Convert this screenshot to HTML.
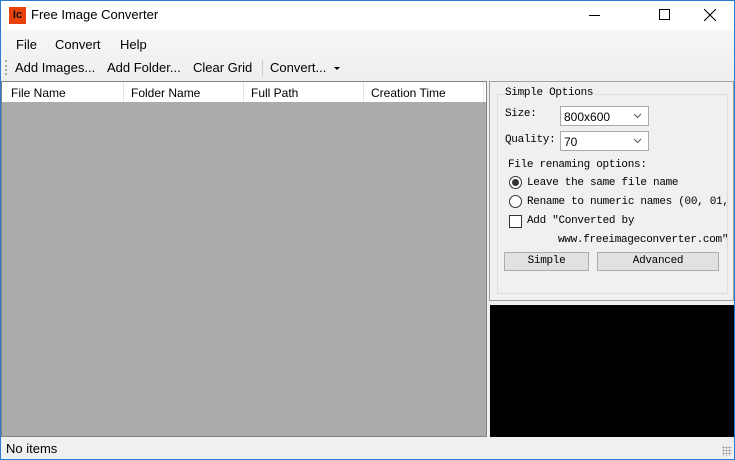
<!DOCTYPE html>
<html><head><style>
*{margin:0;padding:0;box-sizing:border-box}
body{width:735px;height:460px;overflow:hidden;background:#f0f0f0;font-family:"Liberation Sans",sans-serif;font-size:12px;color:#000;position:relative}
.a{position:absolute}
.m{font-family:"Liberation Mono","Noto Sans CJK SC",monospace;font-size:11px;letter-spacing:-0.3px}
.win{border:1px solid #2b7bd0;position:absolute;left:0;top:0;width:735px;height:460px;pointer-events:none}
.hd span{position:absolute;top:4px}
.cb{background:#fff;border:1px solid #a9a9a9;height:20px}
.btn{background:#e1e1e1;border:1px solid #adadad;height:19px;text-align:center;line-height:17px}
</style></head><body>
<div class="a" style="left:0;top:0;width:735px;height:30px;background:#fff"></div>
<div class="a" style="left:9px;top:7px;width:17px;height:17px;background:#e8410c;color:#111;font-weight:bold;font-size:11px;line-height:17px;text-align:center">Ic</div>
<div class="a" style="left:31px;top:7px;font-size:13px">Free Image Converter</div>
<div class="a" style="left:589px;top:15px;width:11px;height:1px;background:#000"></div>
<div class="a" style="left:659px;top:9px;width:11px;height:11px;border:1px solid #000"></div>
<svg class="a" style="left:704px;top:9px" width="12" height="12"><path d="M0 0L12 12M12 0L0 12" stroke="#000" stroke-width="1.1"/></svg>
<div class="a" style="left:0;top:30px;width:735px;height:50px;background:linear-gradient(#f6f7f9,#eeeef0)"></div>
<div class="a" style="left:16px;top:37px;font-size:13px">File</div>
<div class="a" style="left:55px;top:37px;font-size:13px">Convert</div>
<div class="a" style="left:120px;top:37px;font-size:13px">Help</div>
<div class="a" style="left:5px;top:60px;width:2px;height:15px;border-left:2px dotted #aaa"></div>
<div class="a" style="left:15px;top:60px;font-size:13px;word-spacing:0">Add Images...</div>
<div class="a" style="left:107px;top:60px;font-size:13px">Add Folder...</div>
<div class="a" style="left:193px;top:60px;font-size:13px">Clear Grid</div>
<div class="a" style="left:262px;top:60px;width:1px;height:16px;background:#ccc"></div>
<div class="a" style="left:270px;top:60px;font-size:13px">Convert...</div>
<div class="a" style="left:334px;top:67px;border:3px solid transparent;border-top:3px solid #000"></div>
<div class="a" style="left:1px;top:81px;width:486px;height:356px;background:#ababab;border:1px solid #828282"></div>
<div class="a hd" style="left:2px;top:82px;width:484px;height:20px;background:#fff">
<span style="left:9px">File Name</span><span style="left:129px">Folder Name</span><span style="left:249px">Full Path</span><span style="left:369px">Creation Time</span>
<div class="a" style="left:121px;top:0;width:1px;height:20px;background:#e5e5e5"></div>
<div class="a" style="left:241px;top:0;width:1px;height:20px;background:#e5e5e5"></div>
<div class="a" style="left:361px;top:0;width:1px;height:20px;background:#e5e5e5"></div>
<div class="a" style="left:481px;top:0;width:1px;height:20px;background:#e5e5e5"></div>
</div>
<div class="a" style="left:489px;top:81px;width:245px;height:220px;border:1px solid #a0a0a0"></div>
<div class="a" style="left:497px;top:94px;width:231px;height:200px;border:1px solid #dcdcdc"></div>
<div class="a m" style="left:503px;top:87px;background:#f0f0f0;padding:0 2px">Simple Options</div>
<div class="a m" style="left:505px;top:108px">Size:</div>
<div class="a cb" style="left:560px;top:106px;width:89px"><span class="a" style="left:3px;top:3px">800x600</span></div>
<div class="a m" style="left:505px;top:134px">Quality:</div>
<div class="a cb" style="left:560px;top:131px;width:89px"><span class="a" style="left:3px;top:3px">70</span></div>
<svg class="a" style="left:633px;top:113px" width="9" height="6"><path d="M1 1L4.5 4.5L8 1" stroke="#555" fill="none"/></svg>
<svg class="a" style="left:633px;top:138px" width="9" height="6"><path d="M1 1L4.5 4.5L8 1" stroke="#555" fill="none"/></svg>
<div class="a m" style="left:508px;top:159px">File renaming options:</div>
<div class="a" style="left:509px;top:176px;width:13px;height:13px;border:1px solid #333;border-radius:50%;background:#fff"><div style="margin:2px;width:7px;height:7px;border-radius:50%;background:#333"></div></div>
<div class="a m" style="left:527px;top:177px">Leave the same file name</div>
<div class="a" style="left:509px;top:195px;width:13px;height:13px;border:1px solid #333;border-radius:50%;background:#fff"></div>
<div class="a m" style="left:527px;top:196px;white-space:nowrap">Rename to numeric names (00, 01, .</div>
<div class="a" style="left:509px;top:215px;width:13px;height:13px;border:1px solid #333;background:#fff"></div>
<div class="a m" style="left:527px;top:215px">Add "Converted by</div>
<div class="a m" style="left:558px;top:234px">www.freeimageconverter.com"</div>
<div class="a btn m" style="left:504px;top:252px;width:85px">Simple</div>
<div class="a btn m" style="left:597px;top:252px;width:122px">Advanced</div>
<div class="a" style="left:490px;top:305px;width:244px;height:132px;background:#000"></div>
<div class="a" style="left:6px;top:441px;font-size:13px">No items</div>
<div class="a" style="left:722px;top:446px;width:10px;height:10px;background:radial-gradient(#999 0.8px,transparent 1px) 0 0/3px 3px"></div>
<div class="win"></div>
</body></html>
